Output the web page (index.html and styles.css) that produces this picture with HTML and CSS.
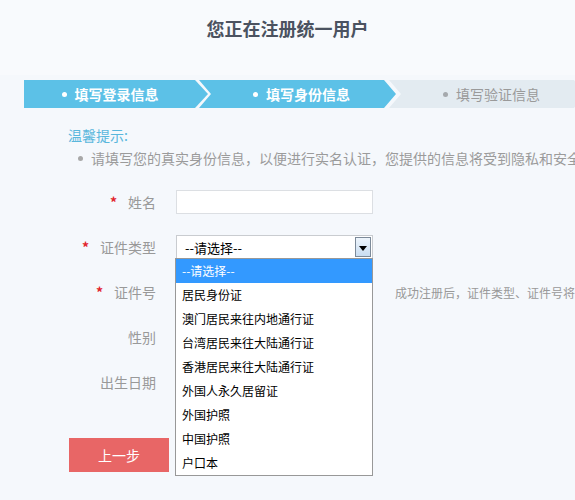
FILE: index.html
```html
<!DOCTYPE html>
<html lang="zh-CN">
<head>
<meta charset="utf-8">
<title>注册统一用户</title>
<link rel="stylesheet" href="styles.css">
</head>
<body>
<div class="page">
  <header class="header">
    <h1 class="title">您正在注册统一用户</h1>
  </header>
  <div class="steps">
    <div class="step step-first active"><span class="dot"></span>填写登录信息</div>
    <div class="step active"><span class="dot"></span>填写身份信息</div>
    <div class="step pending"><span class="dot"></span>填写验证信息</div>
  </div>
  <div class="tips">
    <div class="tips-title">温馨提示:</div>
    <div class="tips-line"><span class="tips-dot"></span>请填写您的真实身份信息，以便进行实名认证，您提供的信息将受到隐私和安全保护</div>
  </div>
  <form class="form">
    <div class="row">
      <label class="label"><span class="star">*</span>姓名</label>
      <div class="input"></div>
    </div>
    <div class="row">
      <label class="label"><span class="star">*</span>证件类型</label>
      <div class="select-wrap">
        <div class="select">
          <span class="select-text">--请选择--</span>
          <span class="select-btn"><span class="tri"></span></span>
        </div>
        <ul class="dropdown">
          <li class="opt selected">--请选择--</li>
          <li class="opt">居民身份证</li>
          <li class="opt">澳门居民来往内地通行证</li>
          <li class="opt">台湾居民来往大陆通行证</li>
          <li class="opt">香港居民来往大陆通行证</li>
          <li class="opt">外国人永久居留证</li>
          <li class="opt">外国护照</li>
          <li class="opt">中国护照</li>
          <li class="opt">户口本</li>
        </ul>
      </div>
    </div>
    <div class="row">
      <label class="label"><span class="star">*</span>证件号</label>
      <div class="input"></div>
      <span class="hint">成功注册后，证件类型、证件号将不可修改</span>
    </div>
    <div class="row">
      <label class="label">性别</label>
      <div class="input"></div>
    </div>
    <div class="row">
      <label class="label">出生日期</label>
      <div class="input"></div>
    </div>
    <div class="actions">
      <button type="button" class="btn-prev">上一步</button>
    </div>
  </form>
</div>
</body>
</html>
```
FILE: styles.css
```css
html, body {
  margin: 0;
  padding: 0;
}
body {
  width: 575px;
  height: 500px;
  overflow: hidden;
  background: #f5f8fc;
  font-family: "Noto Sans CJK SC", "Noto Sans", sans-serif;
}
.page {
  width: 575px;
  min-height: 500px;
}
.header {
  height: 75px;
  background: #f8fafd;
  display: flex;
  justify-content: center;
}
.title {
  margin: 16px 0 0 0;
  font-size: 18px;
  line-height: 24px;
  font-weight: bold;
  color: #4b5260;
}
.steps {
  margin-top: 5px;
  padding-left: 24px;
  display: flex;
  height: 28px;
  white-space: nowrap;
}
.step {
  flex: none;
  width: 197px;
  height: 28px;
  display: flex;
  align-items: center;
  justify-content: center;
  font-size: 14px;
  font-weight: bold;
  color: #fff;
  clip-path: polygon(0 0, calc(100% - 12px) 0, 100% 50%, calc(100% - 12px) 100%, 0 100%, 12px 50%);
  margin-left: -9px;
  padding-left: 8px;
  box-sizing: border-box;
}
.step-first {
  width: 184px;
  margin-left: 0;
  padding-left: 0;
  padding-right: 12px;
  clip-path: polygon(0 0, calc(100% - 13px) 0, 100% 50%, calc(100% - 13px) 100%, 0 100%);
}
.active {
  background: #5cc1e7;
}
.pending {
  background: #e3ebf1;
  color: #9a9a9a;
  font-weight: normal;
  margin-left: -7px;
}
.dot {
  width: 5px;
  height: 5px;
  border-radius: 50%;
  background: #fff;
  margin-right: 8px;
}
.pending .dot {
  background: #a5a9ad;
}
.tips {
  margin-top: 17px;
  padding-left: 68px;
  white-space: nowrap;
}
.tips-title {
  font-size: 14px;
  line-height: 20px;
  color: #5ab7dc;
}
.tips-line {
  margin-top: 3px;
  font-size: 14px;
  line-height: 20px;
  color: #9b9b9b;
  display: flex;
  align-items: center;
  padding-left: 10px;
}
.tips-dot {
  width: 5px;
  height: 5px;
  border-radius: 50%;
  background: #a8a8a8;
  margin-right: 8px;
  flex: none;
}
.form {
  margin: 22px 0 0 0;
}
.row {
  display: flex;
  align-items: center;
  height: 24px;
  margin-bottom: 21px;
  white-space: nowrap;
}
.label {
  width: 156px;
  flex: none;
  text-align: right;
  font-size: 14px;
  color: #999;
  margin-right: 20px;
}
.star {
  color: #e2242d;
  margin-right: 11px;
  font-size: 14px;
  font-weight: bold;
}
.input {
  width: 197px;
  height: 24px;
  box-sizing: border-box;
  border: 1px solid #dcdfe3;
  background: #fff;
  flex: none;
}
.hint {
  margin-left: 22px;
  font-size: 12px;
  color: #999;
}
.select-wrap {
  position: relative;
  width: 197px;
  flex: none;
}
.select {
  width: 197px;
  height: 24px;
  box-sizing: border-box;
  border: 1px solid #c9ccd0;
  background: #fff;
  display: flex;
  align-items: center;
  justify-content: space-between;
}
.select-text {
  font-size: 13px;
  color: #000;
  padding-left: 8px;
}
.select-btn {
  width: 16px;
  height: 20px;
  margin-right: 1px;
  box-sizing: border-box;
  border: 1px solid #7c8a99;
  background: linear-gradient(#eef5fc, #c9ddf1);
  display: flex;
  align-items: center;
  justify-content: center;
}
.tri {
  width: 0;
  height: 0;
  border-left: 4px solid transparent;
  border-right: 4px solid transparent;
  border-top: 5px solid #000;
  margin-top: 2px;
}
.dropdown {
  position: absolute;
  left: -1px;
  top: 23px;
  width: 198px;
  margin: 0;
  padding: 0;
  list-style: none;
  background: #fff;
  border: 1px solid #989898;
  box-sizing: border-box;
  z-index: 10;
}
.opt {
  height: 24px;
  line-height: 24px;
  font-size: 12px;
  color: #000;
  padding-left: 6px;
}
.opt.selected {
  background: #3399ff;
  color: #fff;
}
.actions {
  margin-top: 44px;
  padding-left: 69px;
}
.btn-prev {
  width: 100px;
  height: 34px;
  border: none;
  background: #e86666;
  color: #fff;
  font-size: 14px;
  font-family: "Noto Sans CJK SC", sans-serif;
  padding: 0;
}
```
